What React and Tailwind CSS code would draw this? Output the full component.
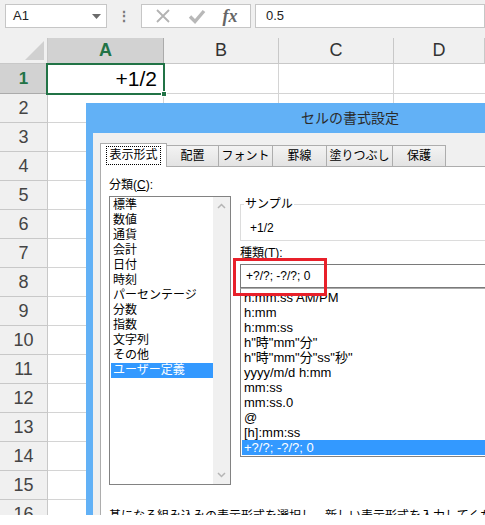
import React from 'react';

// フォント
const ui = "font-['Liberation_Sans','Noto_Sans_CJK_JP',sans-serif]";

const categories = ['標準', '数値', '通貨', '会計', '日付', '時刻', 'パーセンテージ', '分数', '指数', '文字列', 'その他', 'ユーザー定義'];
const formats = ['h:mm:ss AM/PM', 'h:mm', 'h:mm:ss', 'h"時"mm"分"', 'h"時"mm"分"ss"秒"', 'yyyy/m/d h:mm', 'mm:ss', 'mm:ss.0', '@', '[h]:mm:ss', '+?/?; -?/?; 0'];
const tabs = [['表示形式', 'w-[67px]'], ['配置', 'w-[52px]'], ['フォント', 'w-[54px]'], ['罫線', 'w-[54px]'], ['塗りつぶし', 'w-[66px]'], ['保護', 'w-[53px]']];
const rows = [2, 3, 4, 5, 6, 7, 8, 9, 10, 11, 12, 13, 14, 15, 16];

const FormulaBar = () => (
  <div className="h-[38px] flex items-start pt-[4px] pl-[5px] gap-[4px] bg-[#f0f0f0]">
    <div className="w-[102px] h-[24px] bg-white border border-[#c6c6c6] flex items-center justify-between pl-[7px] pr-[5px]">
      <span className="text-[13px] text-[#222]">A1</span>
      <svg width="9" height="5" viewBox="0 0 9 5"><path d="M0 0h9L4.5 5z" fill="#6b6b6b" /></svg>
    </div>
    <div className="w-[26px] h-[24px] flex items-center justify-center text-[#777] text-[14px] font-bold">⋮</div>
    <div className="w-[110px] h-[24px] bg-white border border-[#c6c6c6] flex items-center justify-around px-[4px]">
      <svg width="16" height="16" viewBox="0 0 16 16"><path d="M2 2l12 12M14 2L2 14" stroke="#b3b3b3" strokeWidth="1.8" /></svg>
      <svg width="18" height="16" viewBox="0 0 18 16"><path d="M2 8.5l5 5L16 3" stroke="#b8b8b8" strokeWidth="3.4" fill="none" /></svg>
      <span className="font-['Liberation_Serif',serif] italic font-bold text-[18px] text-[#666] leading-none">fx</span>
    </div>
    <div className="flex-1 h-[24px] bg-white border border-[#c6c6c6] flex items-center pl-[10px]">
      <span className="text-[13px] text-[#222]">0.5</span>
    </div>
  </div>
);

const Sheet = () => (
  <div className="relative grid grid-cols-[48px_116px_115px_115px_1fr] font-['Liberation_Sans',sans-serif]">
    {/* 見出し行 */}
    <div className="h-[26px] bg-[#f0f0f0] border-r border-b border-[#c8c8c8] flex items-end justify-end pr-[3px] pb-[3px]">
      <svg width="19" height="19" viewBox="0 0 19 19"><path d="M19 0v19H0z" fill="#d0d0d0" /></svg>
    </div>
    <div className="h-[26px] bg-[#d2d2d2] border-r border-b border-[#ababab] flex items-center justify-center text-[18px] font-bold text-[#217346]">A</div>
    {['B', 'C', 'D'].map((c) => (
      <div key={c} className="h-[26px] bg-[#f0f0f0] border-r border-b border-[#c8c8c8] flex items-center justify-center text-[18px] text-[#333]">{c}</div>
    ))}
    {/* 1行目 */}
    <div className="h-[30px] bg-[#d2d2d2] border-r border-b border-[#ababab] flex items-center justify-center text-[17px] font-bold text-[#217346]">1</div>
    <div className="h-[30px] bg-white border-r border-b border-[#d4d4d4] flex items-center justify-end pr-[6px] text-[21px] text-black">+1/2</div>
    <div className="h-[30px] bg-white border-r border-b border-[#d4d4d4]" />
    <div className="h-[30px] bg-white border-r border-b border-[#d4d4d4]" />
    <div className="h-[30px] bg-white border-b border-[#d4d4d4]" />
    {rows.map((r) => (
      <React.Fragment key={r}>
        <div className="h-[29px] bg-[#f0f0f0] border-r border-b border-[#c8c8c8] flex items-center justify-center text-[18px] text-[#444]">{r}</div>
        <div className="h-[29px] bg-white border-r border-b border-[#d4d4d4]" />
        <div className="h-[29px] bg-white border-r border-b border-[#d4d4d4]" />
        <div className="h-[29px] bg-white border-r border-b border-[#d4d4d4]" />
        <div className="h-[29px] bg-white border-b border-[#d4d4d4]" />
      </React.Fragment>
    ))}
    {/* アクティブセル */}
    <div className="absolute left-[46px] top-[25px] w-[119px] h-[32px] border-2 border-[#217346]">
      <div className="absolute -right-[4px] -bottom-[4px] w-[6px] h-[6px] bg-[#217346] border border-white" />
    </div>
  </div>
);

const Dialog = () => (
  <div className={`absolute left-[86px] top-[103px] w-[528px] h-[412px] bg-[#62b1f6] pl-[7px] flex flex-col ${ui}`}>
    <div className="h-[30px] shrink-0 flex items-center justify-center text-[14px] text-[#2b2b2b] pr-[7px]">セルの書式設定</div>
    <div className="flex-1 bg-[#f0f0f0] pl-[7px] pt-[10px] flex flex-col min-h-0">
      {/* タブ */}
      <div className="flex items-end h-[24px] -mb-px relative z-10">
        {tabs.map(([t, w], i) =>
          i === 0 ? (
            <div key={t} className={`${w} h-[24px] bg-white border border-b-0 border-[#adadad] flex items-center justify-center`}>
              <span className="border border-dotted border-black px-[2px] text-[12px] leading-[17px] text-black">{t}</span>
            </div>
          ) : (
            <div key={t} className={`${w} h-[21px] mb-px bg-gradient-to-b from-[#f3f3f3] to-[#e3e3e3] border-t border-r border-[#adadad] flex items-center justify-center text-[12px] text-black`}>{t}</div>
          )
        )}
      </div>
      {/* パネル */}
      <div className="flex-1 bg-white border-l border-t border-[#adadad] pl-[8px] pt-[10px] text-[12px] text-black">
        <div className="flex gap-[9px]">
          <div className="w-[122px] shrink-0">
            <div className="leading-[16px]">分類(<span className="underline">C</span>):</div>
            <div className="mt-[3px] h-[289px] border border-[#828282] flex">
              <div className="flex-1 pt-px">
                {categories.map((c, i) => (
                  <div key={c} className={`h-[15px] leading-[15px] ml-px pl-[2px] ${i === categories.length - 1 ? 'bg-[#3399ff] text-white' : ''}`}>{c}</div>
                ))}
              </div>
              <div className="w-[17px] bg-[#f0f0f0] flex flex-col justify-between items-center py-[6px]">
                <svg width="9" height="6" viewBox="0 0 9 6"><path d="M1 5l3.5-3.5L8 5" stroke="#b5b5b5" strokeWidth="1.5" fill="none" /></svg>
                <svg width="9" height="6" viewBox="0 0 9 6"><path d="M1 1l3.5 3.5L8 1" stroke="#b5b5b5" strokeWidth="1.5" fill="none" /></svg>
              </div>
            </div>
          </div>
          <div className="flex-1 pt-[20px] pr-[20px]">
            <fieldset className="border border-[#dcdcdc] pl-[9px] pb-[4px]">
              <legend className="-ml-[6px] px-px leading-[14px]">サンプル</legend>
              <div className="mt-[10px] leading-[15px]">+1/2</div>
            </fieldset>
            <div className="mt-[5px] leading-[15px]">種類(<span className="underline">T</span>):</div>
            <div className="relative mt-[3px]">
              <div className="h-[24px] border border-[#7a7a7a] flex items-center pl-[5px]">+?/?; -?/?; 0</div>
              <div className="absolute -left-[7px] -top-[6px] w-[94px] h-[38px] border-[3px] border-[#e8202a]" />
            </div>
            <div className="h-[169px] border border-[#828282] border-t-[#aaaaaa] overflow-hidden pt-px">
              {formats.map((f, i) => (
                <div key={f} className={`h-[15px] leading-[15px] ml-px pl-[2px] text-[13px] ${i === formats.length - 1 ? 'bg-[#3399ff] text-white' : ''}`}>{f}</div>
              ))}
            </div>
          </div>
        </div>
        <div className="mt-[24px] leading-[15px] whitespace-nowrap">基になる組み込みの表示形式を選択し、新しい表示形式を入力してください。</div>
      </div>
    </div>
  </div>
);

export default function App() {
  return (
    <div className="w-[485px] h-[525px] bg-white">
      <div className="relative w-[485px] h-[515px] overflow-hidden font-['Liberation_Sans',sans-serif]">
        <FormulaBar />
        <Sheet />
        <Dialog />
      </div>
    </div>
  );
}
